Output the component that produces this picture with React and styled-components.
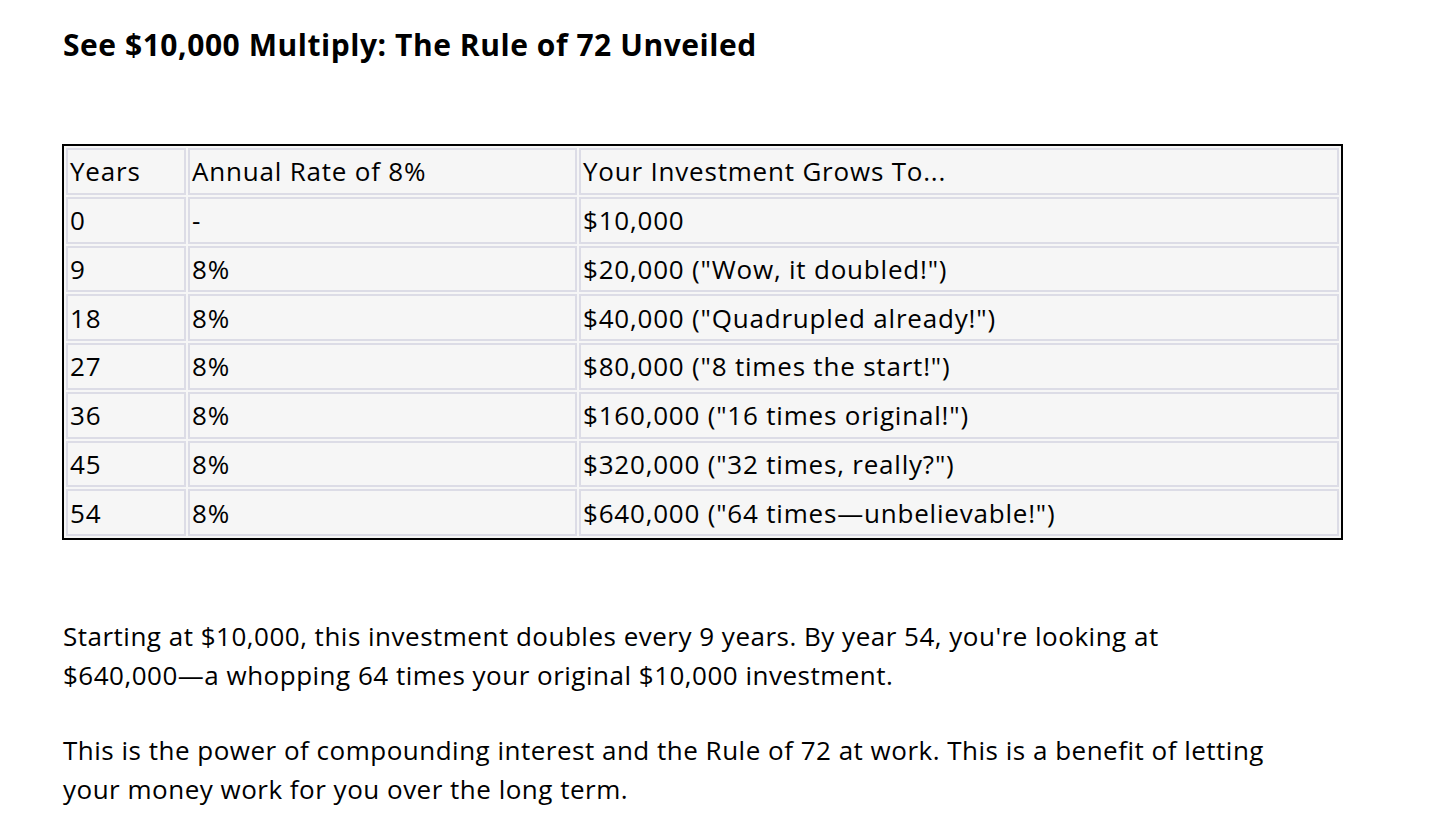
import React from "react";
import styled, { createGlobalStyle } from "styled-components";

const Global = createGlobalStyle`
  html, body {
    margin: 0;
    background: #ffffff;
  }
  body {
    font-family: "Open Sans", Lato, sans-serif;
    color: #000000;
  }
`;

const Page = styled.main`
  padding: 21px 0 0 62px;
`;

const Title = styled.h1`
  margin: 0 0 0 1px;
  font-size: 30px;
  line-height: 48px;
  font-weight: 700;
  letter-spacing: 0.55px;
`;

const Table = styled.table`
  margin-top: 75px;
  width: 1281px;
  border: 2px solid #000000;
  border-spacing: 2px;
  background: #f6f6f6;
  font-size: 26px;
  letter-spacing: 0.8px;
`;

const Cell = styled.td`
  height: 46.75px;
  box-sizing: border-box;
  padding: 0 3px 0 2px;
  border: 2px solid #dcdce6;
  background: #f6f6f6;
  line-height: 30px;
  font-weight: ${(props) => (props.$head ? 500 : 400)};
  width: ${(props) => props.$w || "auto"};
`;

const Text = styled.p`
  margin: 0 0 36px 1px;
  width: 1205px;
  font-size: 26px;
  line-height: 39px;
  letter-spacing: 0.5px;
  &:first-of-type {
    margin-top: 77px;
  }
  &:last-of-type {
    margin-bottom: 0;
  }
`;

const rows = [
  ["0", "-", "$10,000"],
  ["9", "8%", '$20,000 ("Wow, it doubled!")'],
  ["18", "8%", '$40,000 ("Quadrupled already!")'],
  ["27", "8%", '$80,000 ("8 times the start!")'],
  ["36", "8%", '$160,000 ("16 times original!")'],
  ["45", "8%", '$320,000 ("32 times, really?")'],
  ["54", "8%", '$640,000 ("64 times\u2014unbelievable!")'],
];

export default function App() {
  return (
    <Page>
      <Global />
      <Title>See $10,000 Multiply: The Rule of 72 Unveiled</Title>
      <Table>
        <tbody>
          <tr>
            <Cell $head $w="120px">Years</Cell>
            <Cell $head $w="389px">Annual Rate of 8%</Cell>
            <Cell $head>Your Investment Grows To...</Cell>
          </tr>
          {rows.map((r) => (
            <tr key={r[0]}>
              <Cell>{r[0]}</Cell>
              <Cell>{r[1]}</Cell>
              <Cell>{r[2]}</Cell>
            </tr>
          ))}
        </tbody>
      </Table>
      <Text>
        Starting at $10,000, this investment doubles every 9 years. By year 54,
        you're looking at $640,000—a whopping 64 times your original $10,000
        investment.
      </Text>
      <Text>
        This is the power of compounding interest and the Rule of 72 at work.
        This is a benefit of letting your money work for you over the long
        term.
      </Text>
    </Page>
  );
}
